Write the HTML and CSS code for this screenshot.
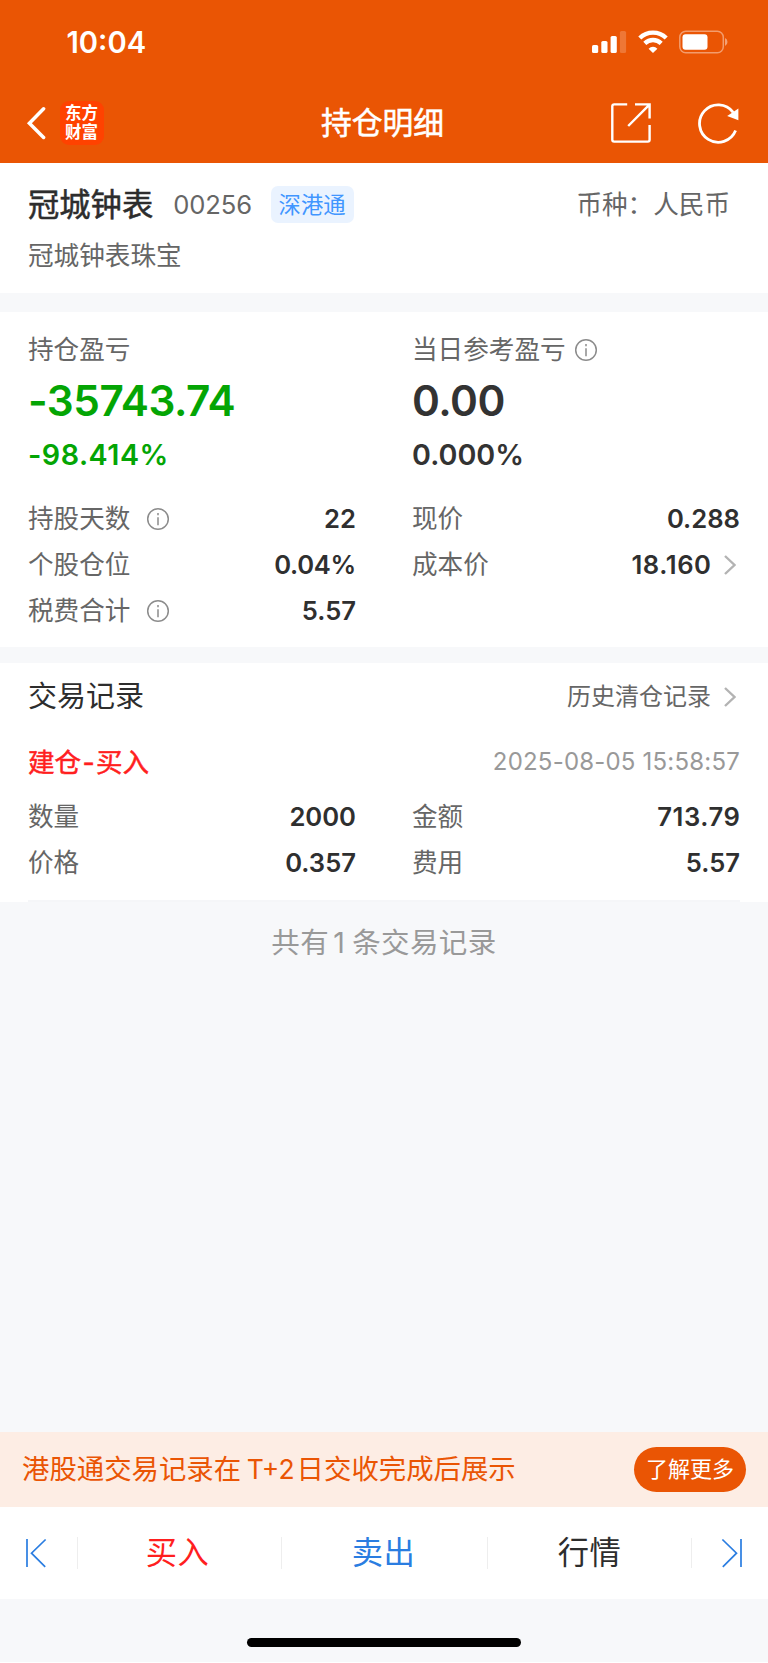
FILE: index.html
```html
<!DOCTYPE html>
<html lang="zh-CN">
<head>
<meta charset="utf-8">
<title>持仓明细</title>
<link rel="stylesheet" href="styles.css">
</head>
<body>
<header class="header">
  <div class="status">
    <span class="time">10:04</span>
    <svg class="signal" width="35" height="24" viewBox="0 0 35 24" fill="#fff"><rect x="0" y="15" width="6.2" height="8" rx="1.6"/><rect x="9.3" y="11" width="6.2" height="12" rx="1.6"/><rect x="18.6" y="6" width="6.2" height="17" rx="1.6"/><rect x="27.9" y="1" width="6.2" height="22" rx="1.6" opacity=".2"/></svg>
    <svg class="wifi" width="30" height="24" viewBox="0 0 30 24"><g fill="none" stroke="#fff"><path d="M1.800 8a19 19 0 0 1 26.400 0" stroke-width="4.400"/><path d="M6.800 13.300a12 12 0 0 1 16.400 0" stroke-width="4.400"/></g><path d="M15 23l-4.400-4.300a6.200 6.200 0 0 1 8.800 0z" fill="#fff"/></svg>
    <svg class="battery" width="50" height="24" viewBox="0 0 50 24"><rect x=".8" y="1.3" width="43.500" height="21.400" rx="6" fill="none" stroke="#fff" stroke-opacity=".42" stroke-width="1.500"/><rect x="3.500" y="4.200" width="25" height="15.600" rx="3" fill="#fff"/><path d="M46 8v8q2.500-1.200 2.500-4t-2.500-4z" fill="#fff" fill-opacity=".45"/></svg>
  </div>
  <div class="nav">
    <div class="nav-side">
      <svg width="20" height="34" viewBox="0 0 20 34"><path d="M17.600 2.800L3.400 17.300 17.600 31.400" fill="none" stroke="#fff" stroke-width="3.500" stroke-linecap="round"/></svg>
      <div class="logo"><span>东方</span><span>财富</span></div>
    </div>
    <h1 class="title">持仓明细</h1>
    <div class="nav-side nav-right">
      <svg width="40" height="40" viewBox="0 0 40 40" fill="none" stroke="#fff" stroke-width="2.4"><path d="M16.200 1.400H3.200Q1.300 1.400 1.300 3.200V36.800Q1.300 38.600 3.200 38.600H36.800Q38.600 38.600 38.600 36.800V22"/><path d="M24 1.400H38.600V15.500M38.200 1.800L17.200 23"/></svg>
      <svg width="41" height="41" viewBox="0 0 41 41"><path d="M37.600 27.500A18.700 18.700 0 1 1 35.200 9.300" fill="none" stroke="#fff" stroke-width="2.800"/><path d="M40.400 5.500V17.300L29.200 13z" fill="#fff"/></svg>
    </div>
  </div>
</header>

<section class="stock">
  <div class="stock-row">
    <h2 class="stock-name">冠城钟表</h2><span class="code">00256</span><span class="tag">深港通</span>
    <span class="currency">币种：人民币</span>
  </div>
  <p class="stock-full">冠城钟表珠宝</p>
</section>

<section class="card summary">
  <div class="cols">
    <div class="col">
      <div class="label">持仓盈亏</div>
      <div class="big down">-35743.74</div>
      <div class="pct down">-98.414%</div>
    </div>
    <div class="col">
      <div class="label">当日参考盈亏<svg class="info near" viewBox="0 0 24 24"><circle cx="12" cy="12" r="10.3"/><path d="M12 10.200v8M12 6v2.200"/></svg></div>
      <div class="big">0.00</div>
      <div class="pct">0.000%</div>
    </div>
  </div>
  <div class="cols facts">
    <div class="col">
      <div class="row"><span>持股天数</span><svg class="info" viewBox="0 0 24 24"><circle cx="12" cy="12" r="10.3"/><path d="M12 10.200v8M12 6v2.200"/></svg><b>22</b></div>
      <div class="row"><span>个股仓位</span><b class="snug">0.04%</b></div>
      <div class="row"><span>税费合计</span><svg class="info" viewBox="0 0 24 24"><circle cx="12" cy="12" r="10.3"/><path d="M12 10.200v8M12 6v2.200"/></svg><b>5.57</b></div>
    </div>
    <div class="col">
      <div class="row"><span>现价</span><b>0.288</b></div>
      <div class="row"><span>成本价</span><b class="loose">18.160</b><svg class="more" viewBox="0 0 12 20"><path d="M1 1l9.500 9L1 19"/></svg></div>
    </div>
  </div>
</section>

<section class="card records">
  <div class="records-head">
    <h2>交易记录</h2>
    <a class="history">历史清仓记录<svg class="more" viewBox="0 0 12 20"><path d="M1 1l9.500 9L1 19"/></svg></a>
  </div>
  <div class="trade-head"><strong>建仓<span class="dash">-</span>买入</strong><time>2025-08-05 15:58:57</time></div>
  <div class="cols trade">
    <div class="col">
      <div class="row"><span>数量</span><b>2000</b></div>
      <div class="row"><span>价格</span><b>0.357</b></div>
    </div>
    <div class="col">
      <div class="row"><span>金额</span><b class="loose">713.79</b></div>
      <div class="row"><span>费用</span><b>5.57</b></div>
    </div>
  </div>
</section>

<main class="rest"><p>共有<span class="count">1</span>条交易记录</p></main>

<aside class="notice"><span>港股通交易记录在<span class="settle">T+2</span>日交收完成后展示</span><button class="learn">了解更多</button></aside>

<nav class="tabs">
  <a class="edge"><svg width="22" height="30" viewBox="0 0 22 30"><path d="M2 1v28M20.600 1.500L6.500 15.200 20.200 28.800"/></svg></a>
  <a class="tab buy">买入</a>
  <a class="tab sell">卖出</a>
  <a class="tab">行情</a>
  <a class="edge last"><svg width="22" height="30" viewBox="0 0 22 30"><path d="M20 1v28M1.400 1.500L15.500 15.200 1.800 28.800"/></svg></a>
</nav>
<footer class="home"><div class="bar"></div></footer>
</body>
</html>
```
FILE: styles.css
```css
* { box-sizing: border-box; margin: 0; padding: 0; }

body {
  display: flex;
  flex-direction: column;
  width: 768px;
  height: 1663px;
  overflow: hidden;
  background: #f7f8fa;
  color: #666;
  font-family: Inter, "Noto Sans CJK SC", sans-serif;
  font-size: 25.6px;
  line-height: 36px;
  white-space: nowrap;
}
svg { display: block; flex: none; }

/* Status bar and navigation */
.header { height: 163.3px; background: #ea5504; color: #fff; flex: none; }
.status { display: flex; align-items: center; height: 84px; padding: 0 39.5px 0 66.5px; }
.time { font-size: 29.2px; line-height: 36px; padding-top: 1px; font-weight: 600; margin-right: auto; }
.wifi { margin-left: 11px; }
.battery { margin-left: 11px; }
.nav { display: flex; align-items: center; height: 78px; padding: 0 29px 0 26px; }
.nav-side { display: flex; align-items: center; flex: 1; }
.nav-right { justify-content: flex-end; gap: 47px; }
.logo {
  display: flex; flex-direction: column; align-items: center; justify-content: center;
  width: 44px; height: 44px; margin-left: 13.5px; border-radius: 9px;
  background: #ff4200; font-size: 16.5px; line-height: 19px; font-weight: 700;
}
.title { font-size: 30.8px; font-weight: 400; -webkit-text-stroke: .5px #fff; }

/* Stock identity */
.stock { height: 129.7px; padding: 23.2px 28px 0; background: #fff; flex: none; }
.stock-row { display: flex; align-items: center; height: 37px; }
.stock-name { font-size: 31.3px; font-weight: 400; color: #2d2d2d; -webkit-text-stroke: .5px #2d2d2d; }
.code { margin-left: 20px; letter-spacing: -.1px; }
.tag {
  display: flex; align-items: center; justify-content: center; width: 83px; height: 37px; margin-left: 18.5px;
  border-radius: 7px; background: #eaf3ff; color: #4196ff; font-size: 22.3px;
}
.currency { margin-left: auto; margin-right: 10px; }
.stock-full { margin-top: 14.5px; }

/* Cards */
.card { padding: 0 28px; background: #fff; flex: none; }
.cols { display: grid; grid-template-columns: 328px 328px; column-gap: 56px; }
.label { display: flex; align-items: center; height: 36px; }
.row { display: flex; align-items: center; height: 46.4px; }
.row b { margin-left: auto; color: #2f2f2f; font-weight: 600; }
.row .loose { letter-spacing: .6px; margin-right: -.6px; }
.row .snug { letter-spacing: -.3px; }
.info { width: 24px; height: 24px; margin-left: 16px; fill: none; stroke: #8c8c8c; stroke-width: 1.5; }
.info.near { margin-left: 8px; }
.more { width: 12px; height: 20px; margin: 0 4px 0 13px; fill: none; stroke: #b3b3b3; stroke-width: 2.4; }

.summary { height: 335px; margin-top: 19.5px; padding-top: 19.5px; }
.big { height: 66px; line-height: 66px; font-size: 42.3px; font-weight: 600; color: #333; letter-spacing: -.5px; }
.pct { height: 42px; line-height: 42px; font-size: 28.7px; font-weight: 600; color: #333; }
.big.down, .pct.down { color: #04a504; }
.pct.down { letter-spacing: .5px; }
.facts { margin-top: 19.5px; }

.records { position: relative; height: 239px; margin-top: 15.3px; }
.records::after {
  content: ""; position: absolute; left: 28px; right: 28px; bottom: 0; height: 1.5px; background: #f5f6f8;
}
.records-head { display: flex; align-items: center; justify-content: space-between; height: 69px; }
.records-head h2 { font-size: 29px; font-weight: 400; color: #2d2d2d; }
.history { display: flex; align-items: center; font-size: 24px; }
.trade-head { display: flex; align-items: center; justify-content: space-between; height: 60px; }
.trade-head strong { font-size: 26.6px; font-weight: 400; color: #ff1f1f; -webkit-text-stroke: .5px #ff1f1f; }
.dash { margin: 0 1.3px; }
.trade-head time { font-size: 24px; color: #999; letter-spacing: .2px; }
.trade { padding-top: 1.8px; }

.rest { flex: 1; padding-top: 23.5px; text-align: center; color: #999; font-size: 28.5px; letter-spacing: .4px; }
.count { margin: 0 7px 0 4px; }

/* Notice */
.notice { display: flex; align-items: center; justify-content: space-between; flex: none; height: 75px; padding: 0 22px; background: #fdede4; color: #ea5504; font-size: 27.4px; }
.settle { margin: 0 2px 0 5.5px; font-size: 26.5px; }
.learn { width: 112px; height: 45px; border: 0; border-radius: 23px; background: #ea5504; color: #fff; font: 22px/45px Inter, "Noto Sans CJK SC", sans-serif; }

/* Bottom bar */
.tabs {
  display: grid; grid-template-columns: 77px 204px 206px 204px 77px; align-items: center; flex: none;
  height: 92px; background: #fff; font-size: 31.3px; letter-spacing: .4px; color: #2d2d2d;
}
.edge { padding-left: 25px; }
.edge svg { fill: none; stroke: #2a7de1; stroke-width: 1.7; }
.edge.last { padding-left: 28.5px; border-left: 1px solid #eee; }
.tab { text-align: center; border-left: 1px solid #eee; line-height: 32px; }
.buy { color: #ff1f1f; padding-right: 4px; }
.sell { color: #2a7de1; padding-right: 2px; }
.home { display: flex; justify-content: center; flex: none; height: 64.2px; padding-top: 38.7px; border-bottom: 1px solid #fff; }
.bar { width: 274px; height: 9.5px; border-radius: 5px; background: #000; }
```
